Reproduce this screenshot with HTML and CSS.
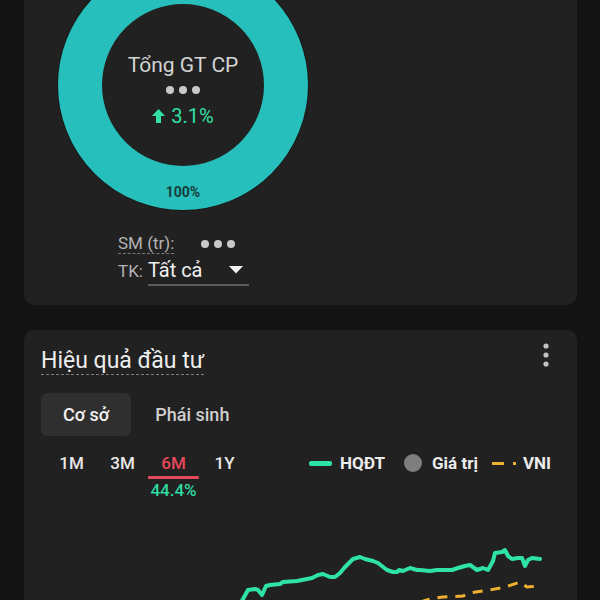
FILE: index.html
```html
<!DOCTYPE html>
<html lang="vi">
<head>
<meta charset="utf-8">
<title>Tài sản</title>
<link rel="stylesheet" href="styles.css">
</head>
<body>
<main class="page">
  <section class="card card-assets">
    <div class="donut">
      <svg class="donut-svg" width="252" height="252" viewBox="0 0 252 252">
        <circle cx="126" cy="126" r="125" fill="none" stroke="#191919" stroke-width="2"/>
        <circle cx="126" cy="126" r="103" fill="none" stroke="#26bfbb" stroke-width="44"/>
        <text x="126" y="238" text-anchor="middle" class="donut-pct">100%</text>
      </svg>
      <div class="donut-center">
        <div class="donut-title">Tổng GT CP</div>
        <div class="dots"><span></span><span></span><span></span></div>
        <div class="donut-change">
          <svg width="13" height="14" viewBox="0 0 13 14"><path d="M6.5 0 L13 7 H9 V14 H4 V7 H0 Z" fill="#31e0a6"/></svg>
          <span>3.1%</span>
        </div>
      </div>
    </div>
    <div class="info">
      <div class="info-row">
        <span class="label dashed">SM (tr):</span>
        <div class="dots dots-sm"><span></span><span></span><span></span></div>
      </div>
      <div class="info-row tk-row">
        <span class="label">TK:</span>
        <div class="select">
          <span>Tất cả</span>
          <svg width="14" height="8" viewBox="0 0 14 8"><path d="M0 0 H14 L7 7.5 Z" fill="#f2f2f2"/></svg>
        </div>
      </div>
    </div>
  </section>

  <section class="card card-perf">
    <header class="perf-head">
      <h2 class="perf-title">Hiệu quả đầu tư</h2>
      <svg class="kebab" width="6" height="24" viewBox="0 0 6 24">
        <circle cx="3" cy="3" r="2.6" fill="#c2c2c2"/>
        <circle cx="3" cy="12" r="2.6" fill="#c2c2c2"/>
        <circle cx="3" cy="21" r="2.6" fill="#c2c2c2"/>
      </svg>
    </header>
    <div class="tabs">
      <button class="tab active">Cơ sở</button>
      <button class="tab">Phái sinh</button>
    </div>
    <div class="period-bar">
      <div class="periods">
        <div class="period">1M</div>
        <div class="period">3M</div>
        <div class="period active">6M<span class="bar"></span><span class="pct">44.4%</span></div>
        <div class="period">1Y</div>
      </div>
      <div class="legend">
        <span class="lg-line"></span><span class="lg-text">HQĐT</span>
        <span class="lg-circle"></span><span class="lg-text">Giá trị</span>
        <span class="lg-dash"></span><span class="lg-dot"></span><span class="lg-text">VNI</span>
      </div>
    </div>
    <svg class="chart" width="553" height="100" viewBox="24 505 553 100">
      <polyline fill="none" stroke="#f0b030" stroke-width="3" stroke-dasharray="10 8" stroke-linejoin="round" points="420,603 430,600 443,598 463,597 470,594 483,592 490,591 500,589 508,587 520,583 527,588 538,587"/>
      <polyline fill="none" stroke="#2fe3a8" stroke-width="4" stroke-linejoin="round" stroke-linecap="round" points="238,608 243,600 248,591 255,590 258,591 262,596 266,587 270,586 280,585 283,583 297,582 302,581 312,579 318,576 323,575 330,578 335,578 340,574 345,568 353,560 360,558 365,560 373,562 378,564 387,571 393,573 397,573 399,571 403,572 410,569 417,571 420,571 430,572 437,571 443,571 452,571 458,569 465,567 470,566 477,571 483,569 488,571 493,562 495,554 502,553 505,551 508,557 512,560 518,559 522,559 525,567 528,561 532,559 540,560"/>
    </svg>
  </section>
</main>
</body>
</html>
```

FILE: styles.css
```css
* { box-sizing: border-box; }

html, body {
  margin: 0;
  height: 100%;
  background: #131313;
  overflow: hidden;
  font-family: Roboto, "Noto Sans", "Liberation Sans", sans-serif;
  color: #e8e8e8;
}

.page {
  padding: 0 23px 0 24px;
}

.card {
  background: #212121;
  border-radius: 10px;
}

.card-assets {
  margin-top: -60px;
  padding: 19px 0 19px 33px;
}

.donut {
  display: grid;
  width: 252px;
  height: 252px;
}

.donut-svg,
.donut-center {
  grid-area: 1 / 1;
}

.donut-pct {
  font-family: Roboto, "Liberation Sans", sans-serif;
  font-size: 14px;
  font-weight: 700;
  fill: #163c3b;
}

.donut-center {
  display: flex;
  flex-direction: column;
  align-items: center;
  padding-top: 94px;
}

.donut-title {
  font-size: 21px;
  line-height: 24px;
  color: #d4d4d4;
}

.dots {
  display: flex;
  gap: 5px;
  margin-top: 9px;
}

.dots span {
  width: 8px;
  height: 8px;
  border-radius: 50%;
  background: #c9c9c9;
}

.donut-change {
  display: flex;
  align-items: center;
  gap: 6px;
  margin-top: 10px;
  font-size: 20px;
  line-height: 24px;
  color: #31e0a6;
}

.info {
  margin-top: 22px;
  padding-left: 61px;
}

.info-row {
  display: flex;
  align-items: center;
  height: 21px;
}

.label {
  font-size: 17px;
  line-height: 20px;
  color: #b4b4b4;
}

.dashed {
  border-bottom: 1px dashed #7a7a7a;
}

.dots-sm {
  margin-top: 0;
  margin-left: 27px;
  gap: 5px;
}

.tk-row {
  height: auto;
  margin-top: 4px;
  align-items: flex-start;
}

.tk-row .label {
  margin-top: 3px;
  margin-right: 5px;
}

.select {
  display: flex;
  align-items: center;
  justify-content: space-between;
  width: 101px;
  padding: 0 6px 2px 0;
  border-bottom: 2px solid #5c5c5c;
  font-size: 20px;
  line-height: 24px;
  color: #f0f0f0;
}

.card-perf {
  margin-top: 25px;
  padding: 18px 17px 0 17px;
  min-height: 320px;
}

.perf-head {
  display: flex;
  justify-content: space-between;
  align-items: flex-start;
}

.perf-title {
  margin: 0;
  font-size: 23px;
  line-height: 26px;
  font-weight: 400;
  color: #ededed;
  border-bottom: 1px dashed #7d7d7d;
}

.kebab {
  margin-top: -5px;
  margin-right: 11px;
}

.tabs {
  display: flex;
  gap: 2px;
  margin-top: 18px;
}

.tab {
  height: 43px;
  padding: 0 22px;
  border: 0;
  border-radius: 6px;
  background: transparent;
  font-family: Roboto, "Liberation Sans", sans-serif;
  font-size: 18px;
  font-weight: 500;
  color: #cfcfcf;
}

.tab.active {
  background: #2f2f2f;
  color: #f2f2f2;
}

.period-bar {
  display: flex;
  justify-content: space-between;
  align-items: flex-start;
  margin-top: 17px;
}

.periods {
  display: flex;
  padding-left: 5px;
}

.period {
  width: 51px;
  display: flex;
  flex-direction: column;
  align-items: center;
  font-size: 17px;
  line-height: 20px;
  font-weight: 500;
  color: #e9e9e9;
}

.period.active {
  color: #e5485a;
}

.period .bar {
  width: 51px;
  height: 3px;
  margin-top: 3px;
  background: #e5485a;
  border-radius: 1px;
}

.period .pct {
  margin-top: 1px;
  font-size: 17px;
  line-height: 20px;
  font-weight: 500;
  color: #31d9a3;
}

.legend {
  display: flex;
  align-items: center;
  height: 20px;
  margin-right: 9px;
  font-size: 17px;
  font-weight: 700;
  color: #ececec;
}

.lg-line {
  width: 23px;
  height: 5px;
  border-radius: 2px;
  background: #2fe3a8;
  margin-right: 8px;
}

.lg-circle {
  width: 18px;
  height: 18px;
  border-radius: 50%;
  background: #7e7e7e;
  margin-left: 19px;
  margin-right: 10px;
}

.lg-dash {
  width: 12px;
  height: 3px;
  background: #f0b030;
  margin-left: 14px;
}

.lg-dot {
  width: 3px;
  height: 3px;
  background: #f0b030;
  margin-left: 9px;
  margin-right: 7px;
}

.lg-text {
  line-height: 20px;
}

.chart {
  display: block;
  margin: 4px 0 0 -17px;
}
```
